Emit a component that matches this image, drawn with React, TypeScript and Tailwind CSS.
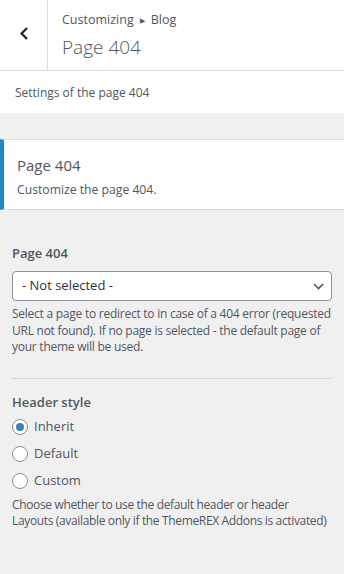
import React, { useState } from 'react';

const font = "font-['Segoe_UI','Open_Sans',sans-serif]";

const App: React.FC = () => {
    const [headerStyle, setHeaderStyle] = useState('inherit');

    const options = [
        { value: 'inherit', label: 'Inherit' },
        { value: 'default', label: 'Default' },
        { value: 'custom', label: 'Custom' },
    ];

    return (
        <div className={`${font} w-[344px] h-[574px] bg-[#f0f0f1] text-[#50575e] overflow-hidden`}>
            {/* Panel header */}
            <div className="bg-white flex h-[71px] border-b border-[#dcdcde]">
                <button className="w-[48px] shrink-0 border-r border-[#dcdcde] flex justify-center pt-[27px] text-[#1d2327]">
                    <svg width="10" height="13" viewBox="0 0 10 13" fill="none">
                        <path d="M8 1 L2.6 6.5 L8 12" stroke="currentColor" strokeWidth="2.3" />
                    </svg>
                </button>
                <div className="pl-[14px] pt-[11px]">
                    <div className="text-[12.5px] leading-[18px] flex items-center gap-[6px]">
                        Customizing
                        <span className="text-[7px] leading-none">&#9654;</span>
                        Blog
                    </div>
                    <div className="text-[19px] font-light leading-[28px] mt-[4px]">Page 404</div>
                </div>
            </div>

            {/* Panel description */}
            <div className="bg-white h-[42px] px-[15px] pt-[14px] text-[12px] leading-[16px]">
                Settings of the page 404
            </div>

            {/* Section title */}
            <div className="mt-[26px] bg-white border-y border-[#dcdcde] border-l-4 border-l-[#2188c4] h-[71px] pl-[13px] pt-[14px]">
                <div className="text-[15px] leading-[22px]">Page 404</div>
                <div className="text-[12.2px] leading-[16px] mt-[6px]">Customize the page 404.</div>
            </div>

            {/* Controls */}
            <div className="px-[12px] pt-[33px]">
                <div className="text-[13px] font-semibold leading-[20px]">Page 404</div>
                <div className="relative mt-[8px]">
                    <select className="w-full h-[30px] appearance-none bg-white border border-[#8c8f94] rounded-[4px] pl-[9px] pr-[24px] text-[13px] text-[#2c3338] outline-none">
                        <option>- Not selected -</option>
                    </select>
                    <svg className="absolute right-[8px] top-[12px] pointer-events-none" width="11" height="7" viewBox="0 0 11 7" fill="none">
                        <path d="M1 1 L5.5 5.5 L10 1" stroke="#50575e" strokeWidth="1.6" />
                    </svg>
                </div>
                <p className="text-[12px] tracking-[-0.25px] leading-[16.6px] mt-[5px]">
                    Select a page to redirect to in case of a 404 error (requested URL not found). If no page is selected - the default page of your theme will be used.
                </p>

                <div className="border-t border-dotted border-[#c3c4c7] mt-[22px]" />

                <div className="text-[13px] font-semibold leading-[20px] mt-[13px]">Header style</div>
                <div className="mt-[5px] flex flex-col gap-[7px]">
                    {options.map((opt) => (
                        <label key={opt.value} className="flex items-center gap-[6px] h-[20px] text-[13px] cursor-pointer">
                            <span className="w-[16px] h-[16px] rounded-full border border-[#8c8f94] bg-white flex items-center justify-center">
                                {headerStyle === opt.value && <span className="w-[8px] h-[8px] rounded-full bg-[#3582c4]" />}
                            </span>
                            <input
                                type="radio"
                                name="header_style"
                                className="hidden"
                                checked={headerStyle === opt.value}
                                onChange={() => setHeaderStyle(opt.value)}
                            />
                            {opt.label}
                        </label>
                    ))}
                </div>
                <p className="text-[12px] tracking-[-0.35px] leading-[16.6px] mt-[6px]">
                    Choose whether to use the default header or header
                    <br />
                    Layouts (available only if the ThemeREX Addons is activated)
                </p>
            </div>
        </div>
    );
};

export default App;
